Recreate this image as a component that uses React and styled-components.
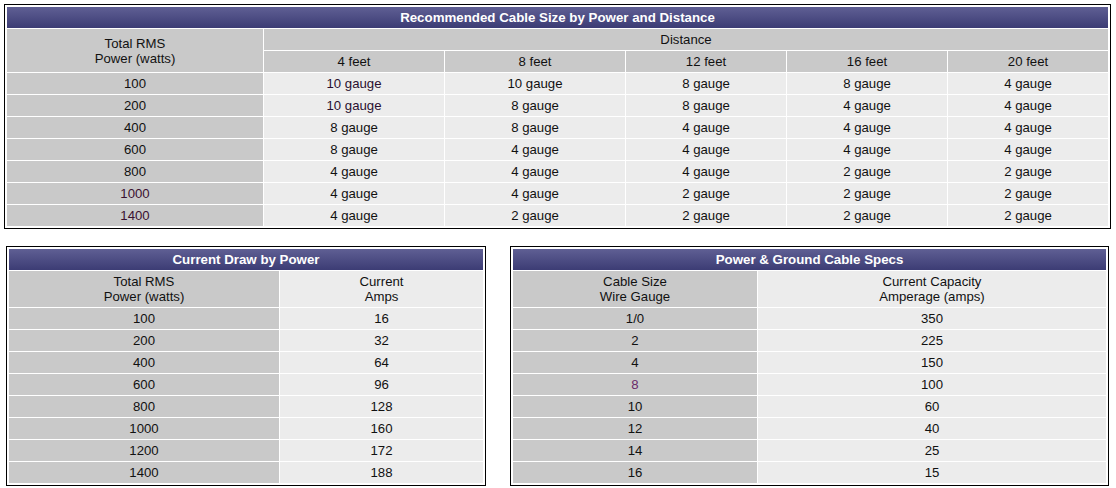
import React from "react";
import styled, { createGlobalStyle } from "styled-components";

const Global = createGlobalStyle`
  html, body { margin: 0; padding: 0; background: #ffffff; }
  body { font-family: "Liberation Sans", Arial, sans-serif; font-size: 13px; color: #111; }
`;

const Page = styled.div`
  padding: 4px 0 0 4px;
  display: flex;
  flex-direction: column;
  gap: 17px;
`;

const BottomRow = styled.div`
  display: flex;
  gap: 24px;
  padding-left: 2px;
`;

const Frame = styled.div`
  border: 1px solid #000;
  padding: 1px;
  width: ${(p) => p.$w}px;
  box-sizing: border-box;
  background: #fff;
`;

const Table = styled.table`
  border-collapse: separate;
  border-spacing: 1px;
  table-layout: fixed;
  width: 100%;
`;

const TitleCell = styled.th`
  background: linear-gradient(#5f5f94, #3c3c74);
  color: #fff;
  font-weight: bold;
  font-size: 13.3px;
  height: 21px;
  padding: 0;
  line-height: 21px;
  text-align: center;
`;

const Cell = styled.td`
  background: ${(p) => (p.$dark ? "#c9c9c9" : "#ececec")};
  color: ${(p) => p.$tint || "#111"};
  font-size: 13.2px;
  text-align: center;
  padding: 0;
  height: ${(p) => p.$h || 21}px;
  line-height: 15px;
  vertical-align: middle;
`;

const top = {
  cols: [256, 180, 180, 160, 160, 160],
  rows: [
    ["100", "10 gauge", "10 gauge", "8 gauge", "8 gauge", "4 gauge"],
    ["200", "10 gauge", "8 gauge", "8 gauge", "4 gauge", "4 gauge"],
    ["400", "8 gauge", "8 gauge", "4 gauge", "4 gauge", "4 gauge"],
    ["600", "8 gauge", "4 gauge", "4 gauge", "4 gauge", "4 gauge"],
    ["800", "4 gauge", "4 gauge", "4 gauge", "2 gauge", "2 gauge"],
    ["1000", "4 gauge", "4 gauge", "2 gauge", "2 gauge", "2 gauge"],
    ["1400", "4 gauge", "2 gauge", "2 gauge", "2 gauge", "2 gauge"],
  ],
};

const tints = {
  "1000": "#3a1030",
  "1400": "#3a1030",
};

const draw = [
  ["100", "16"], ["200", "32"], ["400", "64"], ["600", "96"],
  ["800", "128"], ["1000", "160"], ["1200", "172"], ["1400", "188"],
];

const specs = [
  ["1/0", "350"], ["2", "225"], ["4", "150"], ["8", "100"],
  ["10", "60"], ["12", "40"], ["14", "25"], ["16", "15"],
];

function TwoCol({ width, cols, title, heads, rows, tintFirst }) {
  return (
    <Frame $w={width}>
      <Table>
        <colgroup>
          {cols.map((c, i) => (
            <col key={i} style={{ width: c }} />
          ))}
        </colgroup>
        <thead>
          <tr>
            <TitleCell colSpan={2}>{title}</TitleCell>
          </tr>
        </thead>
        <tbody>
          <tr>
            <Cell $dark $h={36}>
              {heads[0][0]}
              <br />
              {heads[0][1]}
            </Cell>
            <Cell $h={36}>
              {heads[1][0]}
              <br />
              {heads[1][1]}
            </Cell>
          </tr>
          {rows.map((r) => (
            <tr key={r[0]}>
              <Cell $dark $tint={tintFirst && tintFirst[r[0]]}>{r[0]}</Cell>
              <Cell>{r[1]}</Cell>
            </tr>
          ))}
        </tbody>
      </Table>
    </Frame>
  );
}

export default function App() {
  return (
    <>
      <Global />
      <Page>
        <Frame $w={1107}>
          <Table>
            <colgroup>
              {top.cols.map((c, i) => (
                <col key={i} style={{ width: c }} />
              ))}
            </colgroup>
            <thead>
              <tr>
                <TitleCell colSpan={6}>Recommended Cable Size by Power and Distance</TitleCell>
              </tr>
            </thead>
            <tbody>
              <tr>
                <Cell $dark rowSpan={2} $h={43}>
                  Total RMS
                  <br />
                  Power (watts)
                </Cell>
                <Cell $dark colSpan={5}>Distance</Cell>
              </tr>
              <tr>
                {["4 feet", "8 feet", "12 feet", "16 feet", "20 feet"].map((f) => (
                  <Cell $dark key={f}>{f}</Cell>
                ))}
              </tr>
              {top.rows.map((r) => (
                <tr key={r[0]}>
                  {r.map((v, i) => (
                    <Cell
                      key={i}
                      $dark={i === 0}
                      $tint={i === 0 ? tints[v] : i === 1 && v === "10 gauge" ? "#2a1030" : undefined}
                    >
                      {v}
                    </Cell>
                  ))}
                </tr>
              ))}
            </tbody>
          </Table>
        </Frame>
        <BottomRow>
          <TwoCol
            width={480}
            cols={[270, 203]}
            title="Current Draw by Power"
            heads={[["Total RMS", "Power (watts)"], ["Current", "Amps"]]}
            rows={draw}
          />
          <TwoCol
            width={599}
            cols={[244, 348]}
            title="Power & Ground Cable Specs"
            heads={[["Cable Size", "Wire Gauge"], ["Current Capacity", "Amperage (amps)"]]}
            rows={specs}
            tintFirst={{ "8": "#6a2a6a" }}
          />
        </BottomRow>
      </Page>
    </>
  );
}
